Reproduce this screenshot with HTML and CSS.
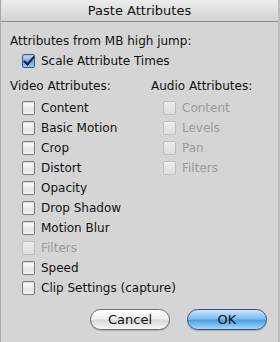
FILE: index.html
```html
<!DOCTYPE html>
<html lang="en">
<head>
  <meta charset="UTF-8" />
  <title>Paste Attributes</title>
  <link rel="stylesheet" href="styles.css">
</head>
<body>
  <div class="dialog">
    <div class="titlebar">Paste Attributes</div>

    <div class="content">
      <div class="source">Attributes from MB high jump:</div>
      <label class="row scale"><span class="box checked"></span>Scale Attribute Times</label>

      <div class="columns">
        <div class="group video">
          <div class="group-title">Video Attributes:</div>
          <label class="row"><span class="box"></span>Content</label>
          <label class="row"><span class="box"></span>Basic Motion</label>
          <label class="row"><span class="box"></span>Crop</label>
          <label class="row"><span class="box"></span>Distort</label>
          <label class="row"><span class="box"></span>Opacity</label>
          <label class="row"><span class="box"></span>Drop Shadow</label>
          <label class="row"><span class="box"></span>Motion Blur</label>
          <label class="row disabled"><span class="box"></span>Filters</label>
          <label class="row"><span class="box"></span>Speed</label>
          <label class="row"><span class="box"></span>Clip Settings (capture)</label>
        </div>

        <div class="group audio">
          <div class="group-title">Audio Attributes:</div>
          <label class="row disabled"><span class="box"></span>Content</label>
          <label class="row disabled"><span class="box"></span>Levels</label>
          <label class="row disabled"><span class="box"></span>Pan</label>
          <label class="row disabled"><span class="box"></span>Filters</label>
        </div>
      </div>

      <div class="buttons">
        <button class="btn">Cancel</button>
        <button class="btn primary">OK</button>
      </div>
    </div>
  </div>
</body>
</html>
```

FILE: styles.css
```css
:root {
  --bg: #d5d5d5;
  --text: #111;
  --muted: #9a9a9a;
}

body {
  margin: 0;
  font-family: 'DejaVu Sans', sans-serif;
  font-size: 12px;
  color: var(--text);
  background: var(--bg);
}

.dialog {
  width: 280px;
  height: 342px;
  box-sizing: border-box;
  border-left: 1px solid #a8a8a8;
  border-right: 2px solid #bdbdbd;
  background: var(--bg);
}

.titlebar {
  height: 21px;
  line-height: 21px;
  text-align: center;
  font-size: 13px;
  background: linear-gradient(#ececec, #d2d2d2);
  border-bottom: 1px solid #8e8e8e;
}

.content {
  padding: 9px 0 0 9px;
}

.source {
  height: 20px;
  line-height: 20px;
}

.row {
  display: flex;
  align-items: center;
  height: 20px;
  padding-left: 12px;
  white-space: nowrap;
}

.scale {
  margin-bottom: 5px;
}

.box {
  width: 11px;
  height: 12px;
  margin-right: 6px;
  border: 1px solid #7d7d7d;
  border-radius: 2px;
  background: linear-gradient(#fdfdfd, #e6e6e6 60%, #f2f2f2);
  box-shadow: inset 0 1px 1px rgba(0, 0, 0, 0.15);
  flex-shrink: 0;
  position: relative;
}

.box.checked {
  border-color: #375b8c;
  background: linear-gradient(#c8e1fa, #6fa8e6 55%, #9ec8f2);
}

.box.checked::after {
  content: "";
  position: absolute;
  left: 3px;
  top: -1px;
  width: 4px;
  height: 9px;
  border: solid #10203a;
  border-width: 0 2px 2px 0;
  transform: rotate(40deg);
}

.disabled {
  color: var(--muted);
}

.disabled .box {
  border-color: #bdbdbd;
  background: linear-gradient(#ececec, #dedede);
  box-shadow: none;
}

.columns {
  display: flex;
}

.group-title {
  height: 20px;
  line-height: 20px;
  margin-bottom: 2px;
}

.video {
  width: 141px;
}

.buttons {
  display: flex;
  justify-content: flex-end;
  gap: 17px;
  padding-right: 11px;
  margin-top: 11px;
}

.btn {
  width: 80px;
  height: 21px;
  padding: 0;
  font-family: inherit;
  font-size: 13px;
  color: #111;
  border: 1px solid #6e6e6e;
  border-radius: 11px;
  background: linear-gradient(#ffffff, #f0f0f0 45%, #d9d9d9 55%, #f7f7f7);
  box-shadow: 0 1px 1px rgba(0, 0, 0, 0.2);
}

.btn.primary {
  border-color: #3a4f8a;
  background: linear-gradient(#cfe6fb, #7fbdf0 45%, #4aa1e6 55%, #a7d8f8);
}
```
